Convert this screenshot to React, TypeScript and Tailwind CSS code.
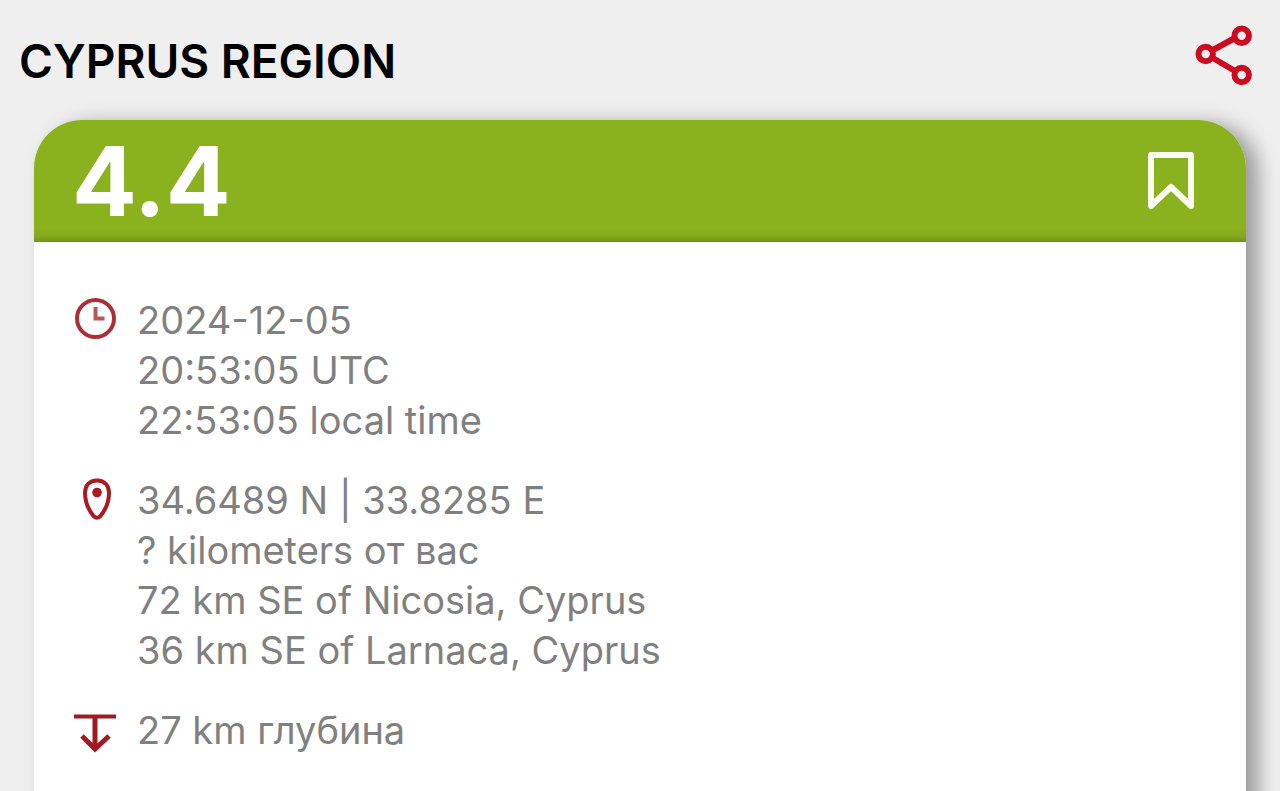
import React from 'react';

interface DetailRowProps {
  icon: React.ReactNode;
  lines: string[];
}

function ShareIcon() {
  return (
    <svg viewBox="0 0 60 62" className="w-[60px] h-[62px]" fill="none" stroke="#cc0a20" strokeWidth="6">
      <path d="M18 25.5 L41 13 M18 32.5 L41 46" />
      <circle cx="11.7" cy="29" r="7.2" />
      <circle cx="47.7" cy="10.7" r="7.2" />
      <circle cx="47.7" cy="50" r="7.2" />
    </svg>
  );
}

function BookmarkIcon() {
  return (
    <svg viewBox="0 0 48 60" className="w-12 h-[60px]" fill="none" stroke="#fbfff0" strokeWidth="6" strokeLinejoin="round">
      <path d="M4 4 H44 V55 L24 36 L4 55 Z" />
    </svg>
  );
}

function ClockIcon() {
  return (
    <svg viewBox="0 0 42 42" className="w-[42px] h-[42px]" fill="none" strokeWidth="4">
      <circle cx="21.5" cy="20.5" r="18.5" stroke="#ab3035" />
      <path d="M21.5 9 V20.5 H30.5" stroke="#b8565a" />
    </svg>
  );
}

function PinIcon() {
  return (
    <svg viewBox="0 0 42 42" className="w-[42px] h-[42px]" fill="none" stroke="#a81c22" strokeWidth="4">
      <path d="M23 2.5 C15 2.5 11 8 11 15 C11 24 15.5 33 19.5 38 Q23 41.5 26.5 38 C30.5 33 35 24 35 15 C35 8 31 2.5 23 2.5 Z" />
      <circle cx="23" cy="14.5" r="4.8" fill="#a81c22" stroke="none" />
    </svg>
  );
}

function DepthIcon() {
  return (
    <svg viewBox="0 0 42 48" className="w-[42px] h-12" fill="none" stroke="#a01a1f" strokeWidth="5">
      <path d="M0 8.5 H42" strokeWidth="4" />
      <path d="M21 9 V40 M8 28 L21 41 L35 28" />
    </svg>
  );
}

function DetailRow({ icon, lines }: DetailRowProps) {
  return (
    <div className="flex items-start gap-[21px]">
      <span className="mt-[3px] shrink-0">{icon}</span>
      <div>
        {lines.map((line) => (
          <p key={line}>{line}</p>
        ))}
      </div>
    </div>
  );
}

export default function App() {
  return (
    <main className="min-h-screen flex flex-col overflow-hidden bg-[#efefef] font-['Inter','Liberation_Sans',sans-serif]">
      <header className="flex items-center justify-between pl-[19px] pr-[26px] h-[120px]">
        <h1 className="pt-[2px] text-[46px] leading-[60px] font-semibold text-black">CYPRUS REGION</h1>
        <button type="button" aria-label="Share" className="-mt-2">
          <ShareIcon />
        </button>
      </header>

      {/* runs past the bottom edge so the side shadow doesn't fade out */}
      <article className="flex-1 flex flex-col mx-[34px] -mb-10 rounded-t-[48px] bg-white shadow-[12px_4px_20px_rgba(0,0,0,0.36)]">
        <div className="flex items-center justify-between h-[122px] pl-[38px] pr-[51px] rounded-t-[48px] bg-[#8ab11e] shadow-[inset_0_-14px_10px_-12px_rgba(0,0,0,0.25)]">
          <strong className="text-[96px] leading-none font-bold text-white">4.4</strong>
          <button type="button" aria-label="Save">
            <BookmarkIcon />
          </button>
        </div>

        <div className="flex flex-col gap-[30px] pt-[53px] pb-16 pl-10 text-[38px] leading-[50px] text-[#808080]">
          <DetailRow icon={<ClockIcon />} lines={['2024-12-05', '20:53:05 UTC', '22:53:05 local time']} />
          <DetailRow icon={<PinIcon />} lines={['34.6489 N | 33.8285 E', '? kilometers от вас', '72 km SE of Nicosia, Cyprus', '36 km SE of Larnaca, Cyprus']} />
          <DetailRow icon={<DepthIcon />} lines={['27 km глубина']} />
        </div>
      </article>
    </main>
  );
}
